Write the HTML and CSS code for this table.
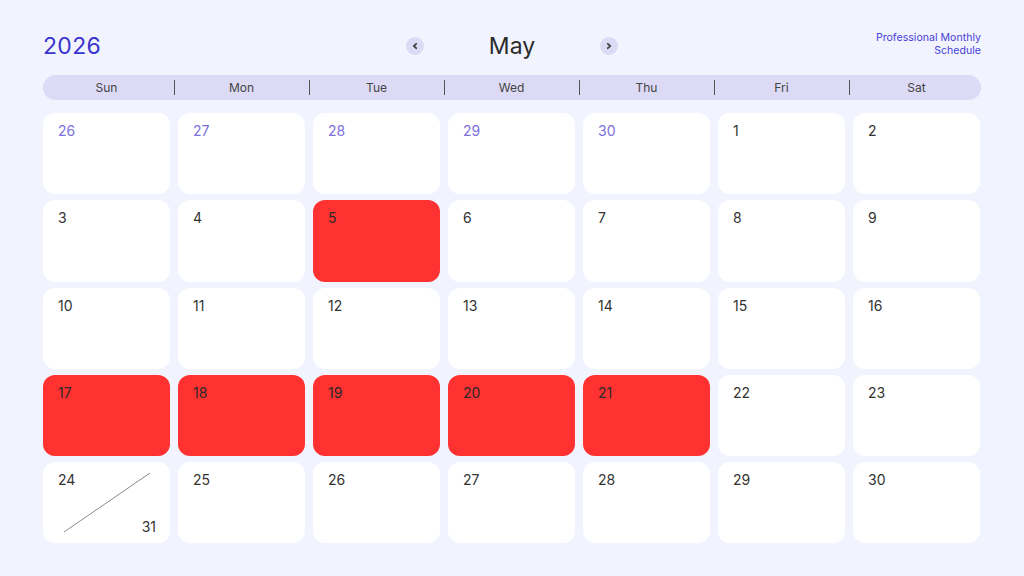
FILE: index.html
```html
<!DOCTYPE html>
<html lang="en">
<head>
<meta charset="utf-8">
<title>May 2026</title>
<link rel="stylesheet" href="styles.css">
</head>
<body>
<div class="page">
  <header class="top">
    <div class="year">2026</div>
    <div class="month-nav">
      <span class="nav-btn"><svg width="8" height="8" viewBox="0 0 8 8"><path d="M5.2 1.8 L2.8 4 L5.2 6.2" fill="none" stroke="#444" stroke-width="1.8" stroke-linecap="round" stroke-linejoin="round"/></svg></span>
      <span class="month">May</span>
      <span class="nav-btn"><svg width="8" height="8" viewBox="0 0 8 8"><path d="M2.8 1.8 L5.2 4 L2.8 6.2" fill="none" stroke="#444" stroke-width="1.8" stroke-linecap="round" stroke-linejoin="round"/></svg></span>
    </div>
    <div class="subtitle">Professional Monthly<br>Schedule</div>
  </header>

  <div class="weekdays">
    <div class="wd">Sun</div>
    <div class="wd sep">Mon</div>
    <div class="wd sep">Tue</div>
    <div class="wd sep">Wed</div>
    <div class="wd sep">Thu</div>
    <div class="wd sep">Fri</div>
    <div class="wd sep">Sat</div>
  </div>

  <div class="grid">
    <div class="day muted">26</div>
    <div class="day muted">27</div>
    <div class="day muted">28</div>
    <div class="day muted">29</div>
    <div class="day muted">30</div>
    <div class="day">1</div>
    <div class="day">2</div>

    <div class="day">3</div>
    <div class="day">4</div>
    <div class="day red">5</div>
    <div class="day">6</div>
    <div class="day">7</div>
    <div class="day">8</div>
    <div class="day">9</div>

    <div class="day">10</div>
    <div class="day">11</div>
    <div class="day">12</div>
    <div class="day">13</div>
    <div class="day">14</div>
    <div class="day">15</div>
    <div class="day">16</div>

    <div class="day red">17</div>
    <div class="day red">18</div>
    <div class="day red">19</div>
    <div class="day red">20</div>
    <div class="day red">21</div>
    <div class="day">22</div>
    <div class="day">23</div>

    <div class="day split">
      <span>24</span>
      <svg class="slash" width="127" height="81" viewBox="0 0 127 81"><line x1="21" y1="70" x2="107" y2="11" stroke="#8a8a8a" stroke-width="1"/></svg>
      <span class="second">31</span>
    </div>
    <div class="day">25</div>
    <div class="day">26</div>
    <div class="day">27</div>
    <div class="day">28</div>
    <div class="day">29</div>
    <div class="day">30</div>
  </div>
</div>
</body>
</html>
```

FILE: styles.css
```css
* { box-sizing: border-box; }
html, body { margin: 0; padding: 0; }
body {
  background: #f1f4fe;
  font-family: "Inter", "Noto Sans", "Liberation Sans", sans-serif;
  color: #333;
  width: 1024px;
  height: 576px;
  overflow: hidden;
}
.page {
  padding: 30px 43px 0 43px;
}
.top {
  display: grid;
  grid-template-columns: 1fr auto 1fr;
  align-items: center;
  height: 32px;
}
.year {
  font-size: 23px;
  color: #3a33cf;
  font-weight: 400;
  letter-spacing: 0.3px;
}
.month-nav {
  display: flex;
  align-items: center;
  gap: 64px;
}
.nav-btn {
  width: 18px;
  height: 18px;
  border-radius: 50%;
  background: #dcdaf5;
  display: flex;
  align-items: center;
  justify-content: center;
}
.month {
  font-size: 23px;
  color: #2b2b2b;
  width: 48px;
  text-align: center;
}
.subtitle {
  justify-self: end;
  text-align: right;
  font-size: 10.6px;
  line-height: 12.5px;
  color: #4a3fd6;
  margin-top: -3px;
}
.weekdays {
  margin-top: 13px;
  height: 25px;
  border-radius: 13px;
  background: #dcdaf5;
  display: grid;
  grid-template-columns: repeat(7, 127px);
  column-gap: 8px;
  align-items: center;
}
.wd {
  position: relative;
  text-align: center;
  font-size: 12px;
  color: #444;
}
.wd.sep::before {
  content: "";
  position: absolute;
  left: -4.5px;
  top: 0;
  width: 1px;
  height: 15px;
  background: #555;
}
.grid {
  margin-top: 13px;
  display: grid;
  grid-template-columns: repeat(7, 127px);
  grid-auto-rows: 81.25px;
  column-gap: 8px;
  row-gap: 6px;
}
.day {
  background: #fff;
  border-radius: 12px;
  padding: 9px 15px;
  font-size: 14px;
  line-height: 18px;
  color: #333;
}
.day.muted { color: #7d6fdd; }
.day.red { background: #ff3131; color: #2a2a2a; }
.day.split {
  position: relative;
  display: flex;
  flex-direction: column;
  justify-content: space-between;
  padding-bottom: 7px;
}
.slash {
  position: absolute;
  left: 0;
  top: 0;
}
.second { align-self: flex-end; margin-right: -1px; }
```
